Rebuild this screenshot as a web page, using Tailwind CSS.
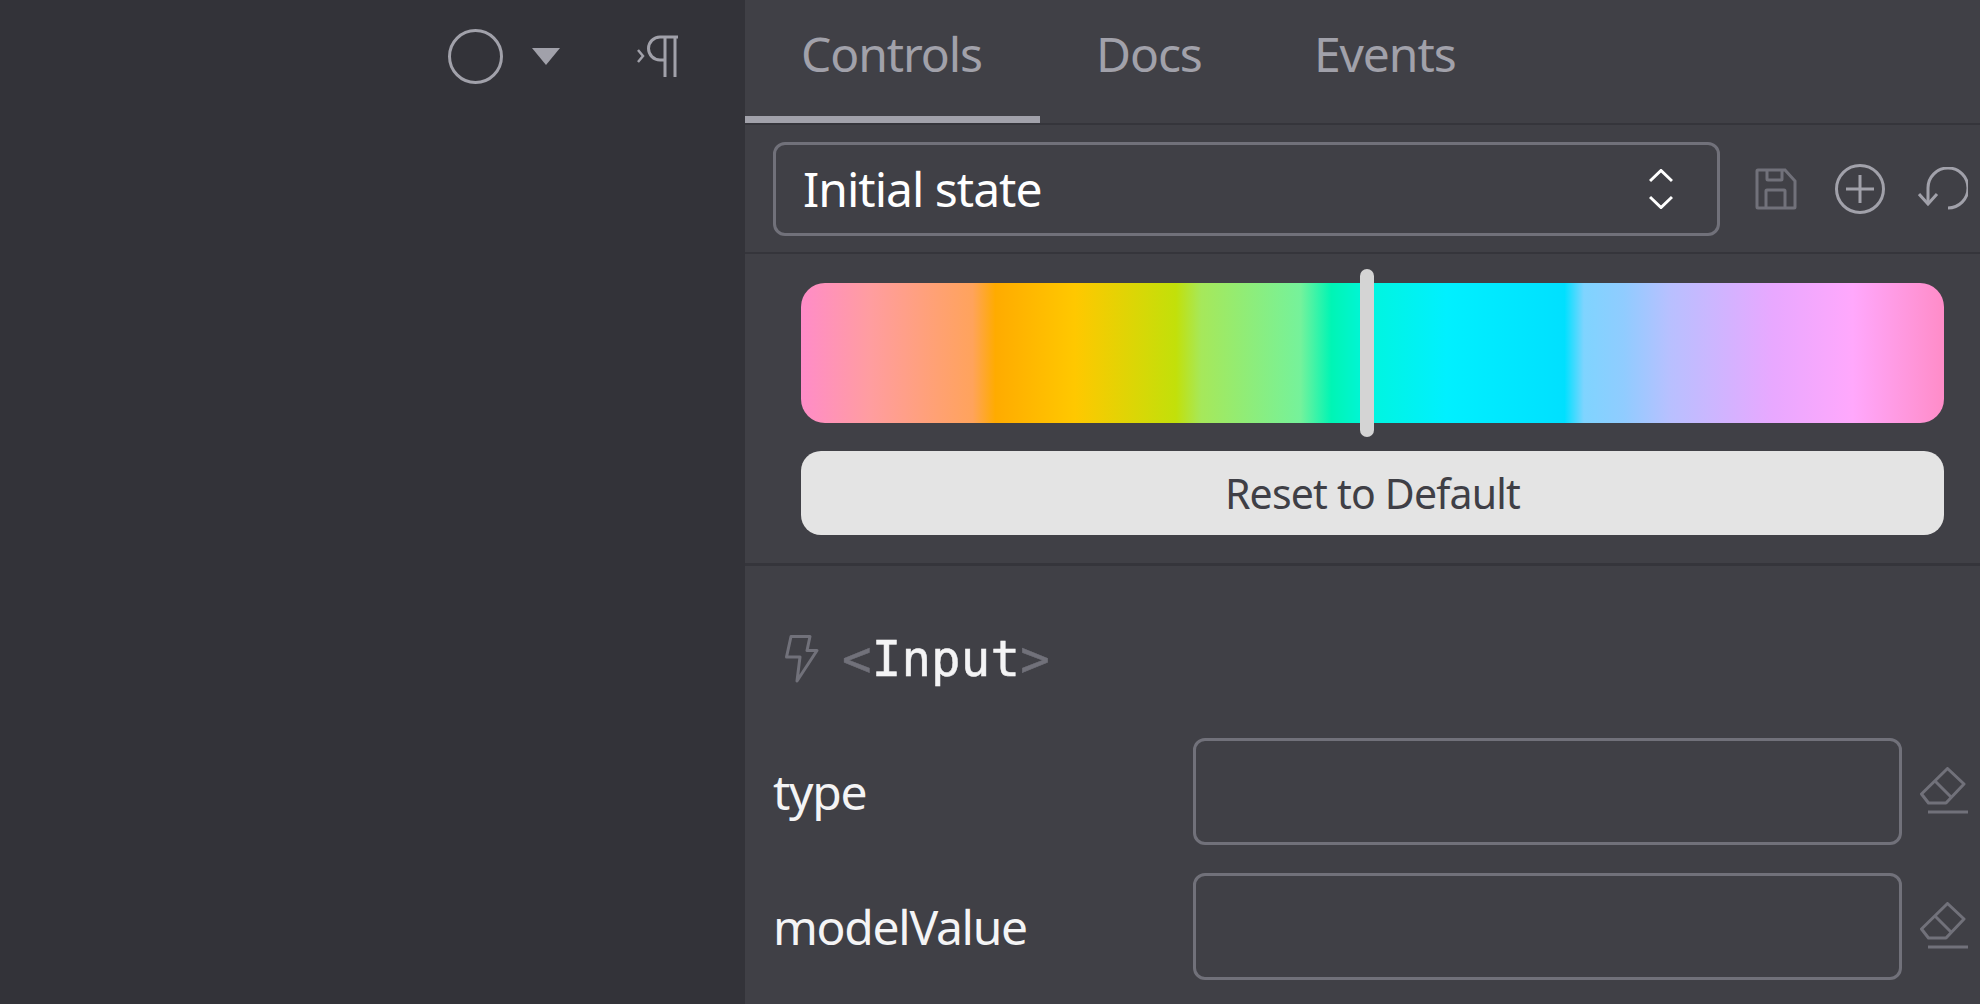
<!doctype html>
<html>
<head>
<meta charset="utf-8">
<title>Input</title>
<script src="https://cdn.jsdelivr.net/npm/@tailwindcss/browser@4"></script>
</head>
<body class="bg-[#333339] font-['Noto_Sans',sans-serif] overflow-hidden">
<div class="flex h-[1004px] w-[1980px]">

    <!-- Preview toolbar -->
    <div class="w-[745px] shrink-0 bg-[#333339]">
        <div class="flex h-[112px] items-center pl-[448px]">
            <div class="w-[55px] h-[55px] rounded-full border-[3px] border-[#a1a1aa]"></div>
            <svg class="ml-[29px] w-[28px] h-[17px]" viewBox="0 0 28 17"><path d="M0 0h28L14 17z" fill="#a1a1aa"/></svg>
            <svg class="ml-[76px] w-[42px] h-[42px]" viewBox="0 0 42 42" fill="none" stroke="#a1a1aa" stroke-width="3">
                <path d="M2 15l5 6-5 6" stroke-width="2.500"/>
                <path d="M42 2H24a11.500 11.500 0 0 0 0 23h5" />
                <path d="M29 2v40M39 2v40" />
            </svg>
        </div>
    </div>

    <!-- Addon panel -->
    <div class="flex-1 bg-[#404046] overflow-hidden">
        <div class="flex h-[125px] border-b-2 border-[#35353b] text-[#a1a1aa] text-[48px] font-[450] tracking-[-1.1px]">
            <div class="w-[295px] h-[123px] pt-[18px] pl-[56px] border-b-[7px] border-[#a1a1aa]">Controls</div>
            <div class="w-[218px] pt-[18px] pl-[56px]">Docs</div>
            <div class="pt-[18px] pl-[56px]">Events</div>
        </div>

        <div class="flex h-[129px] items-center pl-[28px] border-b-2 border-[#35353b]">
            <div class="flex items-center justify-between w-[947px] h-[94px] pl-[27px] pr-[44px] border-[3px] border-[#71717a] rounded-[12px] text-white text-[48px] font-[450] tracking-[-1px]">
                <span>Initial state</span>
                <svg class="w-[24px] h-[40px]" viewBox="0 0 24 40" fill="none" stroke="#fff" stroke-width="3">
                    <path d="M1 12L12 1.500l11 10.500M1 28l11 10.500L23 28"/>
                </svg>
            </div>
            <svg class="ml-[35px] w-[42px] h-[42px]" viewBox="0 0 42 42" fill="none" stroke="#71717a" stroke-width="3">
                <path d="M2 3a1 1 0 0 1 1-1h27l10 11v26a1 1 0 0 1-1 1H3a1 1 0 0 1-1-1z"/>
                <path d="M12 2v9a1 1 0 0 0 1 1h13a1 1 0 0 0 1-1V2M11 40V23a1 1 0 0 1 1-1h17a1 1 0 0 1 1 1v17"/>
            </svg>
            <svg class="ml-[38px] w-[50px] h-[50px]" viewBox="0 0 50 50" fill="none" stroke="#a1a1aa" stroke-width="3">
                <circle cx="25" cy="25" r="23.5"/>
                <path d="M11 25h28M25 11v28"/>
            </svg>
            <svg class="ml-[33px] w-[50px] h-[44px]" viewBox="0 0 50 44" fill="none" stroke="#a1a1aa" stroke-width="3">
                <path d="M30 41A20 20 0 1 0 10 21V37"/>
                <path d="M1 27l9 10 9-10"/>
            </svg>
        </div>

        <div class="h-[312px] border-b-[3px] border-[#35353b] pt-[29px] pl-[56px] pr-[36px]">
            <div class="relative h-[140px] rounded-[24px] bg-[linear-gradient(90deg,#ff8cc8_0%,#ff9da0_6%,#ffa35c_15%,#ffab00_17%,#ffc800_24%,#c2e00a_32.800%,#a6e85a_35%,#75f29b_43.700%,#00f5b5_46.400%,#00f5e0_50%,#00f0ff_56.500%,#00e0ff_66.800%,#7fd4ff_68.500%,#90ccff_72%,#b8c0ff_76%,#e8a8ff_85%,#ffa8fc_92%,#ff8cc8_100%)]">
                <div class="absolute left-[559px] top-[-14px] w-[14px] h-[168px] rounded-full bg-[#d4d4d4]"></div>
            </div>
            <div class="flex items-center justify-center h-[84px] mt-[28px] pt-[1px] rounded-[20px] bg-[#e4e4e4] text-[#3f3f46] text-[41px] font-[450] tracking-[-0.8px]">Reset to Default</div>
        </div>

        <div class="flex items-center h-[172px] pt-[14px] pl-[40px]">
            <svg class="w-[34px] h-[48px]" viewBox="0 0 34 48" fill="none" stroke="#71717a" stroke-width="3" stroke-linejoin="round">
                <path d="M6 1.500h19l-3 14h10L12 46l3-24H1.500z"/>
            </svg>
            <span class="ml-[23px] font-['DejaVu_Sans_Mono',monospace] text-[49px] leading-none tracking-[0.2px] text-[#f4f4f5] [-webkit-text-stroke:0.5px_currentColor]"><span class="text-[#71717a]">&lt;</span>Input<span class="text-[#71717a]">&gt;</span></span>
        </div>

        <div class="flex items-center h-[107px] pl-[28px]">
            <div class="w-[420px] text-[48px] font-[450] tracking-[-1.3px] text-[#f4f4f5]">type</div>
            <div class="w-[709px] h-[107px] rounded-[12px] border-[3px] border-[#71717a]"></div>
            <svg class="ml-[18px] mb-[3px] w-[48px] h-[47px]" viewBox="0 0 48 47" fill="none" stroke="#71717a" stroke-width="3" stroke-linejoin="round">
                <path d="M1.500 27L27.500 1.500 44 17 26 36H8.500z"/><path d="M15 14l16 16M8 45h40"/>
            </svg>
        </div>
        <div class="flex items-center h-[107px] mt-[28px] pl-[28px]">
            <div class="w-[420px] text-[48px] font-[450] tracking-[-1.3px] text-[#f4f4f5]">modelValue</div>
            <div class="w-[709px] h-[107px] rounded-[12px] border-[3px] border-[#71717a]"></div>
            <svg class="ml-[18px] mb-[3px] w-[48px] h-[47px]" viewBox="0 0 48 47" fill="none" stroke="#71717a" stroke-width="3" stroke-linejoin="round">
                <path d="M1.500 27L27.500 1.500 44 17 26 36H8.500z"/><path d="M15 14l16 16M8 45h40"/>
            </svg>
        </div>
    </div>
</div>
</body>
</html>
